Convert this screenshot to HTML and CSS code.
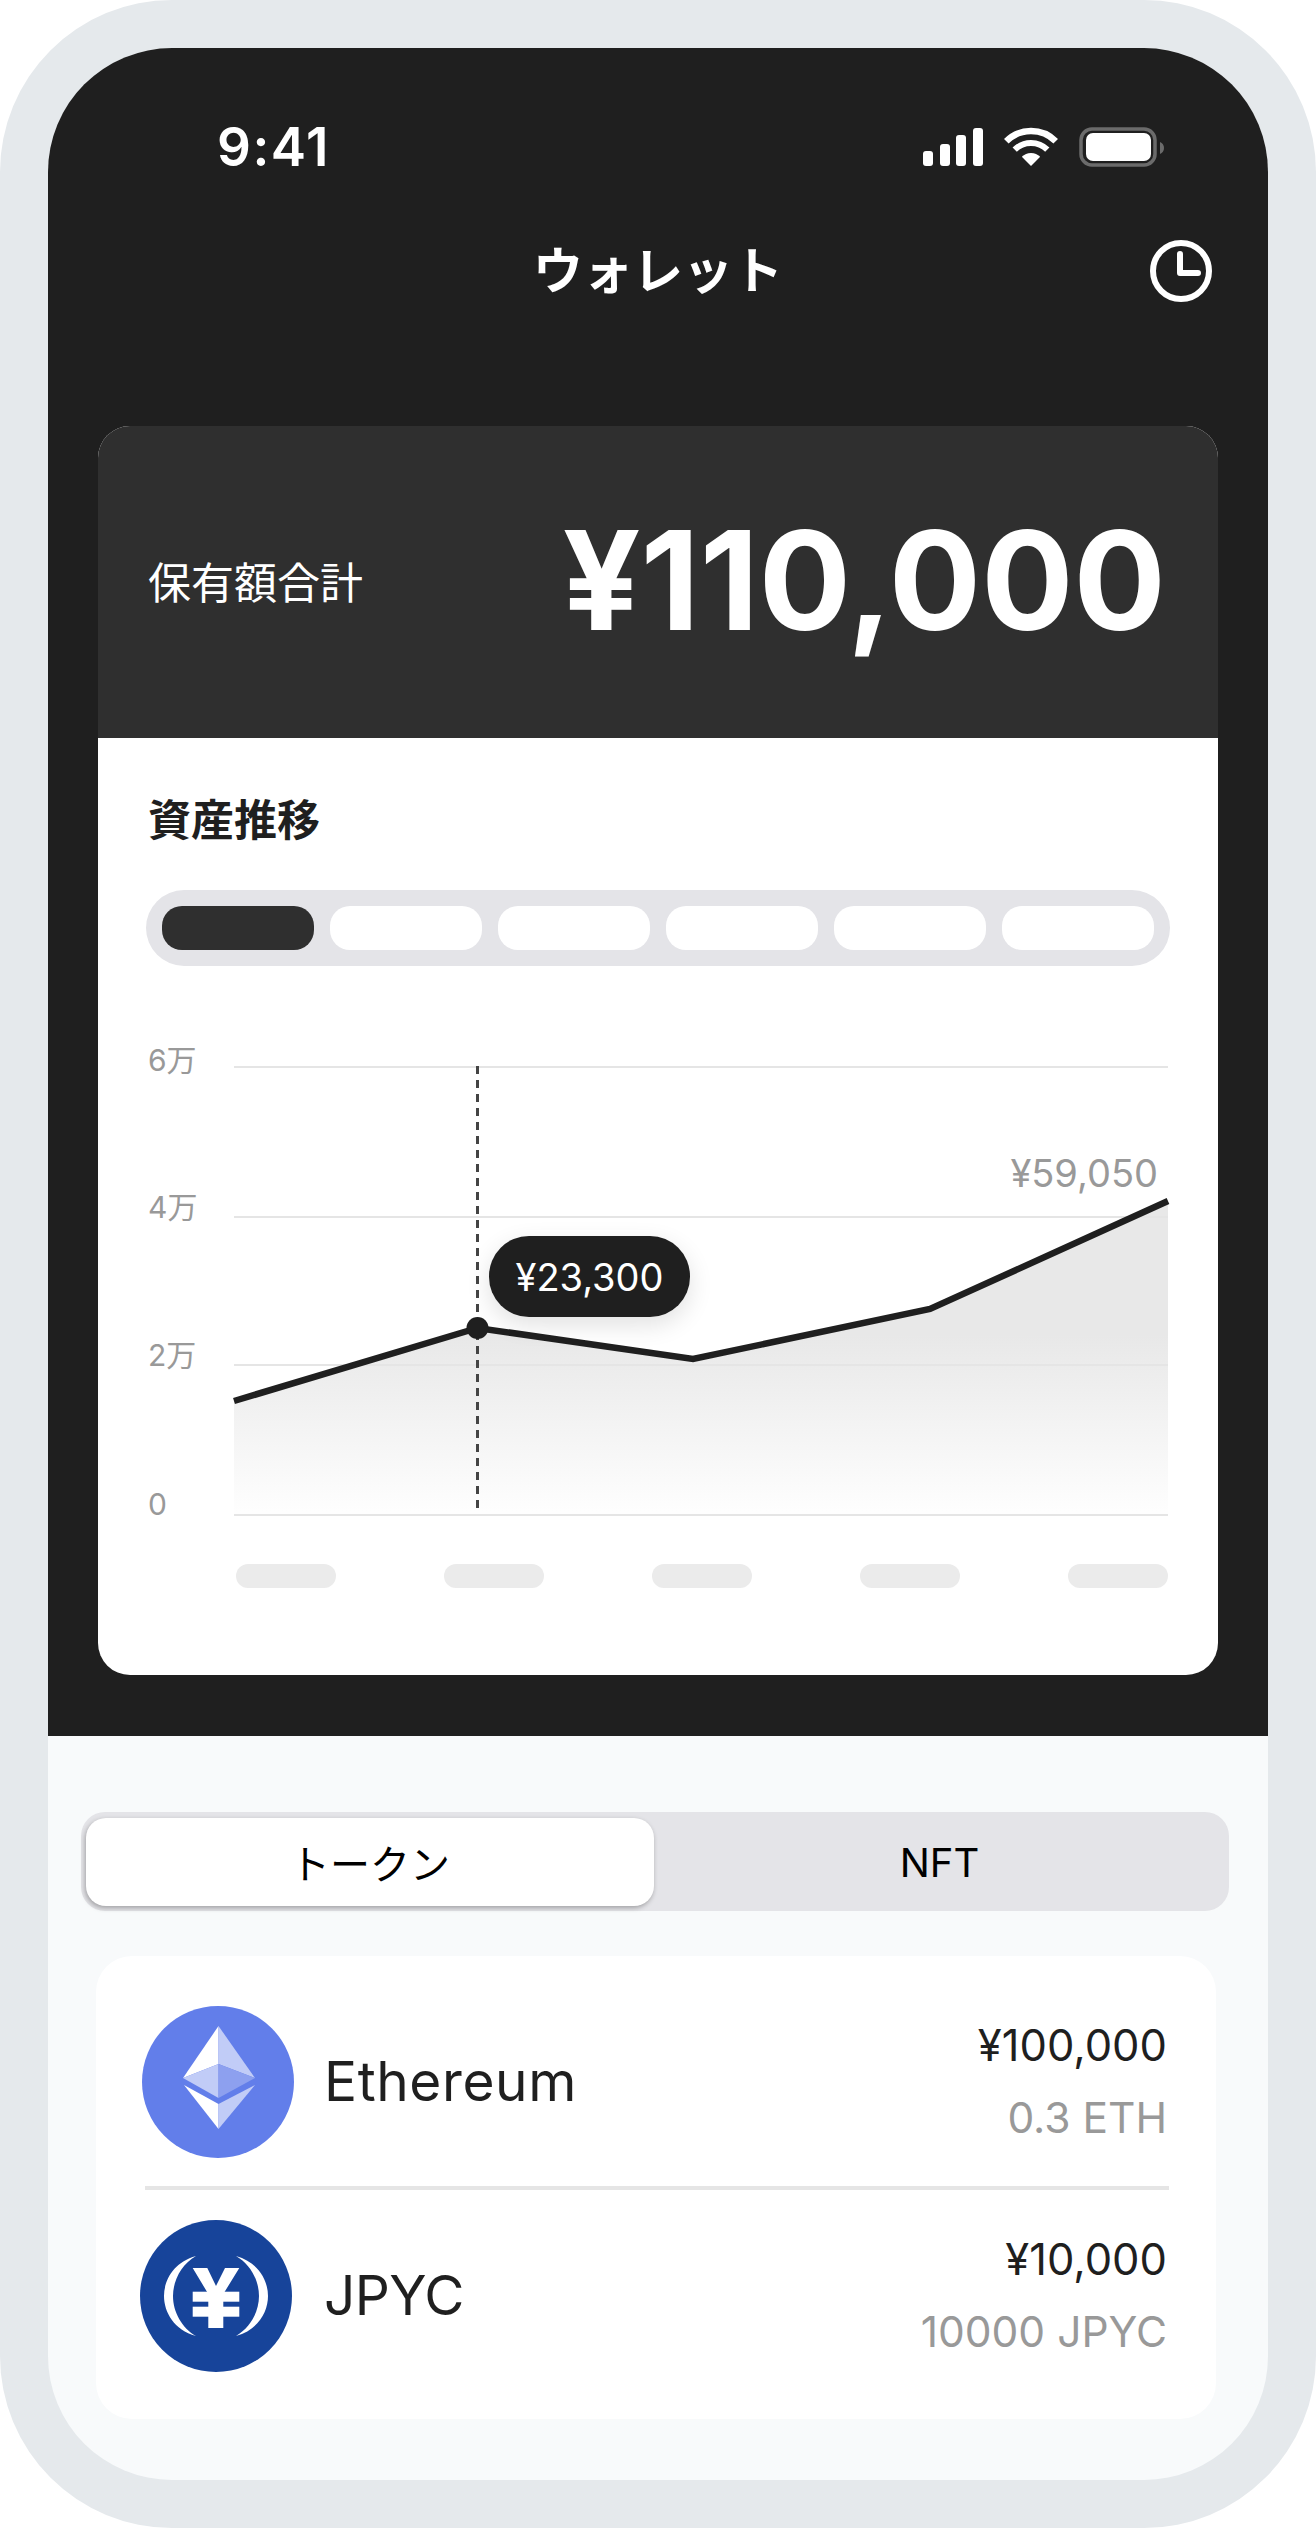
FILE: index.html
```html
<!DOCTYPE html>
<html lang="ja">
<head>
  <meta charset="UTF-8" />
  <title>ウォレット</title>
  <link rel="stylesheet" href="styles.css">
</head>
<body>
  <div class="frame">
    <div class="screen">
      <div class="top">
        <div class="status">
          <span class="time">9:41</span>
          <svg class="status-icons" width="241" height="40" viewBox="0 0 241 40">
            <rect x="0" y="24" width="10" height="15" rx="3" fill="#fff" />
            <rect x="17" y="17" width="10" height="22" rx="3" fill="#fff" />
            <rect x="33" y="8" width="10" height="31" rx="3" fill="#fff" />
            <rect x="50" y="1" width="10" height="38" rx="3" fill="#fff" />
            <path d="M83.3 14.3A35 35 0 0 1 132.7 14.3" fill="none" stroke="#fff" stroke-width="6.5" />
            <path d="M91.7 22.7A23 23 0 0 1 124.3 22.7" fill="none" stroke="#fff" stroke-width="6" />
            <path d="M108 39L98.8 29.8A13 13 0 0 1 117.2 29.8Z" fill="#fff" />
            <rect x="158" y="2" width="74" height="36" rx="11" fill="none" stroke="#6b6b6b" stroke-width="3.5" />
            <rect x="163" y="6" width="65" height="28" rx="7" fill="#fff" />
            <path d="M237 15C239.500 16 241 18 241 21C241 24 239.500 26 237 27Z" fill="#6b6b6b" />
          </svg>
        </div>

        <div class="header">
          <span></span>
          <h1 class="title">ウォレット</h1>
          <svg class="history" width="62" height="62" viewBox="0 0 62 62">
            <circle cx="31" cy="31" r="28" fill="none" stroke="#fff" stroke-width="6" />
            <path d="M30 14V33H48" fill="none" stroke="#fff" stroke-width="6" stroke-linecap="round" stroke-linejoin="round" />
          </svg>
        </div>

        <div class="card">
          <div class="total">
            <span class="total-label">保有額合計</span>
            <span class="total-value">¥110,000</span>
          </div>
          <div class="card-body">
            <h2 class="card-title">資産推移</h2>
            <div class="ranges">
              <div class="range active"></div>
              <div class="range"></div>
              <div class="range"></div>
              <div class="range"></div>
              <div class="range"></div>
              <div class="range"></div>
            </div>
            <div class="chart">
              <svg class="chart-svg" width="1024" height="500" viewBox="0 0 1024 500">
                <defs>
                  <linearGradient id="areaFill" gradientUnits="userSpaceOnUse" x1="0" y1="295" x2="0" y2="480">
                    <stop offset="0" stop-color="#e8e8e8" />
                    <stop offset="1" stop-color="#e8e8e8" stop-opacity="0" />
                  </linearGradient>
                </defs>
                <path class="area" d="M88 361L331.500 288L547 319L784 269L1022 161V475H88Z" fill="url(#areaFill)" />
                <path class="grid" d="M88 27H1022M88 177H1022M88 325H1022M88 475H1022" />
                <text class="axis" x="2" y="31">6万</text>
                <text class="axis" x="2" y="178">4万</text>
                <text class="axis" x="2" y="326">2万</text>
                <text class="axis" x="2" y="475">0</text>
                <text class="last-value" x="1012" y="147">¥59,050</text>
                <path class="cursor" d="M331.500 26V470" />
                <path class="line" d="M88 361L331.500 288L547 319L784 269L1022 161" />
                <circle cx="331.500" cy="288" r="11" fill="#1f1f1f" />
              </svg>
              <div class="tooltip">¥23,300</div>
              <div class="x-labels">
                <div class="x-label"></div>
                <div class="x-label"></div>
                <div class="x-label"></div>
                <div class="x-label"></div>
                <div class="x-label"></div>
              </div>
            </div>
          </div>
        </div>
      </div>

      <div class="bottom">
        <div class="tabs">
          <div class="tab selected">トークン</div>
          <div class="tab">NFT</div>
        </div>
        <div class="tokens">
          <div class="token">
            <svg class="token-icon" width="152" height="152" viewBox="0 0 152 152">
              <circle cx="76" cy="76" r="76" fill="#627eea" />
              <polygon points="76.500,20 41,72 76.500,58" fill="#fff" />
              <polygon points="76.500,20 113,72 76.500,58" fill="#c1ccf7" />
              <polygon points="76.500,58 41,72 76.500,92" fill="#c1ccf7" />
              <polygon points="76.500,58 113,72 76.500,92" fill="#8da0ef" />
              <polygon points="42,79 76.500,98 76.500,123" fill="#fff" />
              <polygon points="113,79 76.500,98 76.500,123" fill="#c1ccf7" />
            </svg>
            <div class="token-name">Ethereum</div>
            <div class="token-amounts">
              <div class="token-yen">¥100,000</div>
              <div class="token-qty">0.3 ETH</div>
            </div>
          </div>
          <div class="divider"></div>
          <div class="token jpyc">
            <svg class="token-icon" width="152" height="152" viewBox="0 0 152 152">
              <circle cx="76" cy="76" r="76" fill="#17449a" />
              <path d="M56 36C34 42 24 60 24 76C24 92 34 110 56 116C42 108 33 92 33 76C33 60 42 44 56 36Z" fill="#fff" />
              <path d="M96 36C118 42 128 60 128 76C128 92 118 110 96 116C110 108 119 92 119 76C119 60 110 44 96 36Z" fill="#fff" />
              <polygon points="52.700,48 67.300,48 76,66 85,48 99.300,48 83.300,74 83.300,108 68.300,108 68.300,74" fill="#fff" />
              <rect x="52.700" y="71.700" width="46.600" height="10" fill="#fff" />
              <rect x="52.700" y="86.700" width="46.600" height="10" fill="#fff" />
            </svg>
            <div class="token-name">JPYC</div>
            <div class="token-amounts">
              <div class="token-yen">¥10,000</div>
              <div class="token-qty">10000 JPYC</div>
            </div>
          </div>
        </div>
      </div>
    </div>
  </div>
</body>
</html>
```

FILE: styles.css
```css
* {
  box-sizing: border-box;
}

body {
  margin: 0;
  background: #fff;
  font-family: Inter, 'Noto Sans CJK JP', sans-serif;
  color: #1f1f1f;
}

.frame {
  width: 1316px;
  height: 2528px;
  padding: 48px;
  background: #e5e9ec;
  border-radius: 172px;
}

.screen {
  height: 2432px;
  border-radius: 124px;
  overflow: hidden;
  background: #f8fafb;
}

.top {
  height: 1688px;
  background: #1f1f1f;
  padding-top: 6px;
}

.status {
  height: 186px;
  padding: 0 104px 0 169px;
  display: flex;
  align-items: center;
  justify-content: space-between;
}

.time {
  font-size: 53px;
  font-weight: 600;
  color: #fff;
  letter-spacing: 1.5px;
}

.header {
  height: 62px;
  padding: 0 56px;
  display: grid;
  grid-template-columns: 1fr auto 1fr;
  align-items: center;
}

.title {
  margin: 0;
  font-size: 50px;
  font-weight: 700;
  line-height: 62px;
  color: #fff;
}

.history {
  justify-self: end;
}

.card {
  margin: 124px 50px 0;
  border-radius: 32px;
  overflow: hidden;
  background: #fff;
}

.total {
  height: 312px;
  padding: 0 52px 4px 50px;
  background: #2f2f2f;
  display: flex;
  align-items: center;
  justify-content: space-between;
}

.total-label {
  font-size: 43px;
  color: #fff;
}

.total-value {
  font-size: 137px;
  font-weight: 700;
  color: #fff;
}

.card-body {
  padding: 52px 48px 87px;
}

.card-title {
  margin: 0 0 40px 2px;
  font-size: 43px;
  font-weight: 700;
  line-height: 60px;
}

.ranges {
  height: 76px;
  padding: 16px;
  border-radius: 38px;
  background: #e4e4e8;
  display: flex;
  gap: 16px;
}

.range {
  flex: 1;
  border-radius: 20px;
  background: #fff;
}

.range.active {
  background: #2f2f2f;
}

.chart {
  position: relative;
  margin-top: 74px;
}

.chart-svg {
  display: block;
}

.grid {
  fill: none;
  stroke: #e5e5e5;
  stroke-width: 2;
}

.line {
  fill: none;
  stroke: #1f1f1f;
  stroke-width: 6.5;
}

.cursor {
  fill: none;
  stroke: #444;
  stroke-width: 3;
  stroke-dasharray: 8 6;
}

.axis {
  font-size: 30px;
  fill: #999;
}

.last-value {
  font-size: 38px;
  fill: #999;
  text-anchor: end;
}

.tooltip {
  position: absolute;
  left: 343px;
  top: 196px;
  width: 201px;
  height: 81px;
  border-radius: 40px;
  background: #1f1f1f;
  box-shadow: 0 8px 24px rgba(0, 0, 0, 0.12);
  color: #fff;
  font-size: 38px;
  display: flex;
  align-items: center;
  justify-content: center;
}

.x-labels {
  margin: 24px 2px 0 90px;
  display: flex;
  justify-content: space-between;
}

.x-label {
  width: 100px;
  height: 24px;
  border-radius: 12px;
  background: #ebebeb;
}

.bottom {
  padding: 76px 0 0;
}

.tabs {
  height: 99px;
  margin: 0 39px 0 33px;
  padding: 6px 0 5px 5px;
  border-radius: 24px;
  background: #e4e4e8;
  display: flex;
}

.tab {
  flex: 1;
  display: flex;
  align-items: center;
  justify-content: center;
  font-size: 40px;
  color: #000;
  padding-right: 4px;
}

.tab.selected {
  flex: none;
  width: 568px;
  padding-right: 0;
  border-radius: 20px;
  background: #fff;
  box-shadow: -1px 2px 5px rgba(0, 0, 0, 0.3);
}

.tokens {
  margin: 45px 52px 0 48px;
  height: 463px;
  padding-top: 50px;
  border-radius: 36px;
  background: #fff;
}

.token {
  height: 152px;
  margin: 0 49px 0 46px;
  display: flex;
  align-items: flex-start;
  gap: 30px;
}

.token.jpyc {
  margin: 30px 49px 0 44px;
  gap: 32px;
}

.divider {
  height: 4px;
  margin: 28px 47px 0 49px;
  background: #e5e5e5;
}

.token-icon {
  flex: none;
}

.token-name {
  font-size: 55px;
  line-height: 150px;
  letter-spacing: 0.6px;
}

.jpyc .token-name {
  letter-spacing: -0.6px;
}

.token-amounts {
  margin-left: auto;
  padding-top: 15px;
  text-align: right;
}

.token-yen {
  font-size: 43.5px;
  line-height: 48px;
}

.token-qty {
  margin-top: 25px;
  font-size: 42.5px;
  line-height: 48px;
  color: #999;
}
```
